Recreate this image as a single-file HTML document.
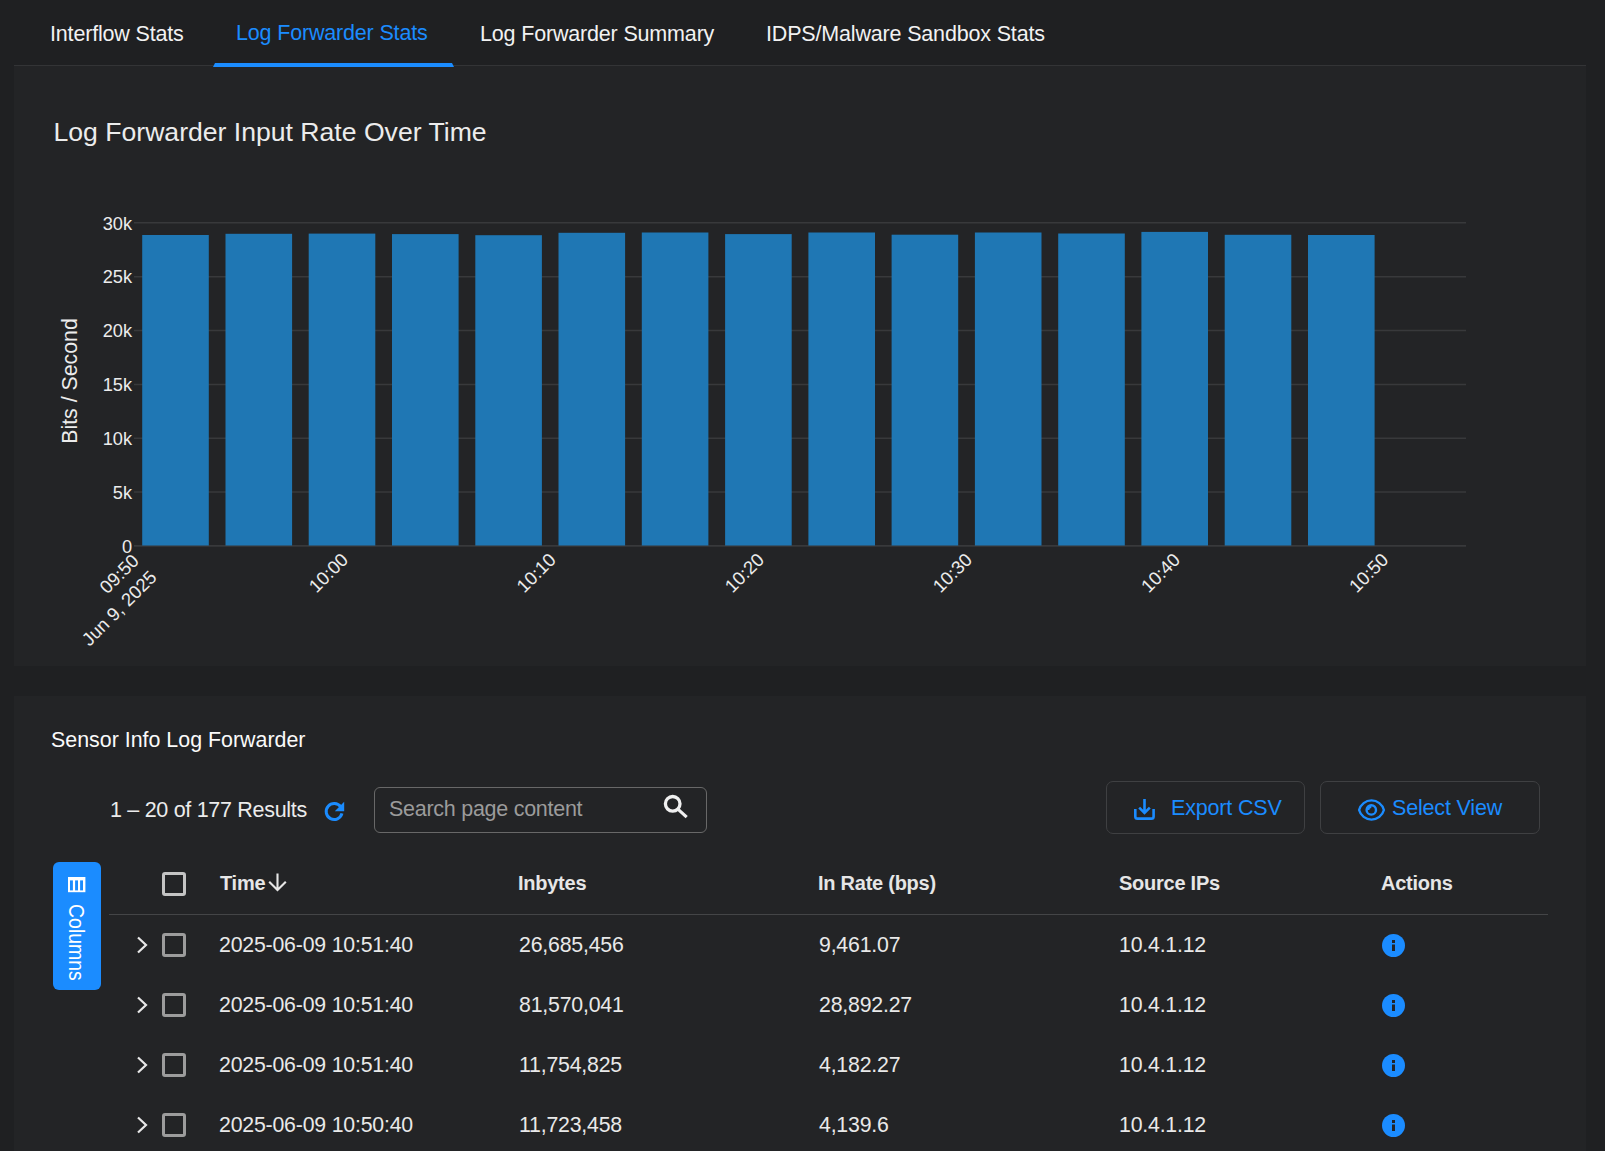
<!DOCTYPE html>
<html><head><meta charset="utf-8">
<style>
html,body{margin:0;padding:0;}
body{width:1605px;height:1151px;overflow:hidden;background:#1f2022;position:relative;font-family:"Liberation Sans",sans-serif;color:#ececec;}
.abs{position:absolute;}
.tab{position:absolute;top:22px;font-size:21.5px;letter-spacing:-0.17px;line-height:24px;white-space:nowrap;color:#f2f2f2;}
.panel{position:absolute;left:14px;width:1572px;background:#232426;}
.td{position:absolute;font-size:21.3px;letter-spacing:-0.2px;line-height:24px;white-space:nowrap;color:#e9e9e9;}
.th{position:absolute;font-size:20px;letter-spacing:-0.25px;line-height:24px;white-space:nowrap;color:#e6e6e6;font-weight:bold;}
.cb{position:absolute;width:18px;height:18px;border:3px solid #9c9c9c;border-radius:3px;}
.chev,.info{position:absolute;}
.btn{position:absolute;top:781px;height:51px;border:1px solid #3f4042;border-radius:7px;box-sizing:content-box;}
.btxt{position:absolute;font-size:21.5px;letter-spacing:-0.17px;line-height:24px;white-space:nowrap;color:#1b8cff;}
</style></head><body>
<!-- tabs -->
<div class="tab" style="left:50px">Interflow Stats</div>
<div class="tab" style="left:236px;top:21px;color:#1b8cff">Log Forwarder Stats</div>
<div class="tab" style="left:480px">Log Forwarder Summary</div>
<div class="tab" style="left:766px">IDPS/Malware Sandbox Stats</div>
<div class="abs" style="left:14px;top:65px;width:1572px;height:1px;background:#333436"></div>
<div class="panel" style="top:66px;height:600px"></div>
<div class="abs" style="left:213px;top:63px;width:241px;height:4px;background:#1b8cff;clip-path:polygon(2px 0,239px 0,241px 4px,0 4px)"></div>
<div class="panel" style="top:696px;height:455px"></div>

<!-- chart -->
<svg class="abs" style="left:0;top:0" width="1605" height="700" viewBox="0 0 1605 700">
<text x="53.5" y="141" font-family="Liberation Sans" font-size="26.6" fill="#ececec">Log Forwarder Input Rate Over Time</text>
<g stroke="#38393b" stroke-width="1.5">
<line x1="134" x2="1466" y1="222.8" y2="222.8"/>
<line x1="134" x2="1466" y1="276.7" y2="276.7"/>
<line x1="134" x2="1466" y1="330.6" y2="330.6"/>
<line x1="134" x2="1466" y1="384.5" y2="384.5"/>
<line x1="134" x2="1466" y1="438.3" y2="438.3"/>
<line x1="134" x2="1466" y1="492.1" y2="492.1"/>
<line x1="134" x2="1466" y1="545.8" y2="545.8" stroke-width="1.7"/>
</g>
<g fill="#1f77b4">
<rect x="142.2" y="235" width="66.6" height="310.5"/>
<rect x="225.5" y="233.8" width="66.6" height="311.7"/>
<rect x="308.7" y="233.6" width="66.6" height="311.9"/>
<rect x="392.0" y="234.1" width="66.6" height="311.4"/>
<rect x="475.3" y="235.2" width="66.6" height="310.3"/>
<rect x="558.5" y="232.8" width="66.6" height="312.7"/>
<rect x="641.8" y="232.5" width="66.6" height="313.0"/>
<rect x="725.1" y="234.1" width="66.6" height="311.4"/>
<rect x="808.4" y="232.5" width="66.6" height="313.0"/>
<rect x="891.6" y="234.7" width="66.6" height="310.8"/>
<rect x="974.9" y="232.5" width="66.6" height="313.0"/>
<rect x="1058.2" y="233.5" width="66.6" height="312.0"/>
<rect x="1141.4" y="231.9" width="66.6" height="313.6"/>
<rect x="1224.7" y="234.8" width="66.6" height="310.7"/>
<rect x="1308.0" y="235" width="66.6" height="310.5"/>
</g>
<g font-family="Liberation Sans" font-size="18.2" fill="#ececec">
<text x="132" y="229.5" text-anchor="end">30k</text>
<text x="132" y="283.4" text-anchor="end">25k</text>
<text x="132" y="337.3" text-anchor="end">20k</text>
<text x="132" y="391.2" text-anchor="end">15k</text>
<text x="132" y="445.1" text-anchor="end">10k</text>
<text x="132" y="499.0" text-anchor="end">5k</text>
<text x="132" y="552.5" text-anchor="end">0</text>
<text transform="translate(140.1,562) rotate(-45)" text-anchor="end" font-size="18.5">09:50</text>
<text transform="translate(349.2,561) rotate(-45)" text-anchor="end" font-size="18.5">10:00</text>
<text transform="translate(557.1,561) rotate(-45)" text-anchor="end" font-size="18.5">10:10</text>
<text transform="translate(765.2,561) rotate(-45)" text-anchor="end" font-size="18.5">10:20</text>
<text transform="translate(973.3,561) rotate(-45)" text-anchor="end" font-size="18.5">10:30</text>
<text transform="translate(1181.4,561) rotate(-45)" text-anchor="end" font-size="18.5">10:40</text>
<text transform="translate(1389.5,561) rotate(-45)" text-anchor="end" font-size="18.5">10:50</text>
<text transform="translate(157.8,578.5) rotate(-45)" text-anchor="end" font-size="18.5">Jun 9, 2025</text>
</g>
<text transform="translate(77,381) rotate(-90)" text-anchor="middle" font-family="Liberation Sans" font-size="21.3" fill="#ececec">Bits / Second</text>
</svg>

<!-- table section -->
<div class="abs" style="left:51px;top:728px;font-size:21.4px;line-height:24px;color:#fafafa;white-space:nowrap">Sensor Info Log Forwarder</div>
<div class="abs" style="left:110px;top:798px;font-size:21.5px;letter-spacing:-0.3px;line-height:24px;color:#ececec;white-space:nowrap">1 – 20 of 177 Results</div>
<svg class="abs" style="left:318px;top:795px" width="34" height="31" viewBox="0 0 34 31"><path d="M22.75 11.91 A8 8 0 1 0 23.96 18.44" fill="none" stroke="#1b8cff" stroke-width="3"/><path d="M26.2 6.8 V16.2 H16.8 Z" fill="#1b8cff"/></svg>
<div class="abs" style="left:374px;top:787px;width:331px;height:44px;border:1px solid #686868;border-radius:6px"></div>
<div class="abs" style="left:389px;top:797px;font-size:21.5px;letter-spacing:-0.27px;line-height:24px;color:#9b9b9b;white-space:nowrap">Search page content</div>
<svg class="abs" style="left:655px;top:788px" width="40" height="37" viewBox="0 0 40 37"><circle cx="17.7" cy="15.8" r="7.3" fill="none" stroke="#f0f0f0" stroke-width="3.3"/><path d="M22.6 20.9 L31.7 29.1" stroke="#f0f0f0" stroke-width="3.2"/></svg>

<div class="btn" style="left:1106px;width:197px"></div>
<svg class="abs" style="left:1133px;top:798px" width="24" height="24" viewBox="0 0 24 24"><path d="M11.5 0.9 V14.5 M6.2 9.6 L11.5 14.9 L16.8 9.6" fill="none" stroke="#1b8cff" stroke-width="2.6"/><path d="M2.3 11 V18.4 Q2.3 20.6 4.5 20.6 H18.4 Q20.6 20.6 20.6 18.4 V11" fill="none" stroke="#1b8cff" stroke-width="2.6"/></svg>
<div class="btxt" style="left:1171px;top:796px">Export CSV</div>
<div class="btn" style="left:1320px;width:218px"></div>
<svg class="abs" style="left:1353px;top:793px" width="38" height="34" viewBox="0 0 38 34"><path d="M6.1 17 A12.81 12.81 0 0 1 30.9 17 A12.81 12.81 0 0 1 6.1 17 Z" fill="none" stroke="#1b8cff" stroke-width="2.4" stroke-linejoin="round"/><circle cx="18.3" cy="16.95" r="4.7" fill="none" stroke="#1b8cff" stroke-width="2.4"/><path d="M13.65 16.95 A4.7 4.7 0 0 1 18.3 12.25 V15 A1.95 1.95 0 0 0 16.35 16.95 Z" fill="#1b8cff"/></svg>
<div class="btxt" style="left:1392px;top:796px">Select View</div>

<!-- columns button -->
<div class="abs" style="left:53px;top:862px;width:48px;height:128px;background:#1b8cff;border-radius:6px"></div>
<svg class="abs" style="left:67px;top:876px" width="20" height="18" viewBox="0 0 20 18"><rect x="1" y="1" width="17.4" height="15.2" fill="#fff"/><rect x="3" y="4.4" width="2.9" height="10" fill="#1b8cff"/><rect x="8.1" y="4.4" width="2.9" height="10" fill="#1b8cff"/><rect x="13.1" y="4.4" width="2.9" height="10" fill="#1b8cff"/></svg>
<div class="abs" style="left:64px;top:904px;width:24px;height:77px;"><div style="position:absolute;left:0;top:0;transform-origin:0 0;transform:translate(24px,0) rotate(90deg) scaleX(0.885);font-size:22px;line-height:24px;color:#fff;white-space:nowrap">Columns</div></div>

<!-- header -->
<div class="cb" style="left:162px;top:872px;border-color:#c4c4c4"></div>
<div class="th" style="left:220px;top:871px">Time</div>
<svg class="abs" style="left:267px;top:872px" width="21" height="22" viewBox="0 0 21 22"><path d="M10.5 1.5 V18 M2.2 9.8 L10.5 18.1 L18.8 9.8" fill="none" stroke="#e6e6e6" stroke-width="2.1"/></svg>
<div class="th" style="left:518px;top:871px">Inbytes</div>
<div class="th" style="left:818px;top:871px">In Rate (bps)</div>
<div class="th" style="left:1119px;top:871px">Source IPs</div>
<div class="th" style="left:1381px;top:871px">Actions</div>
<div class="abs" style="left:109px;top:914px;width:1439px;height:1px;background:#444547"></div>
<svg class="chev" style="left:136px;top:936px" width="14" height="18" viewBox="0 0 14 18"><path d="M2 1.5 L10 9 L2 16.5" fill="none" stroke="#e8e8e8" stroke-width="2.2"/></svg>
<div class="cb" style="left:162px;top:933px"></div>
<div class="td" style="left:219px;top:933px">2025-06-09 10:51:40</div>
<div class="td" style="left:519px;top:933px">26,685,456</div>
<div class="td" style="left:819px;top:933px">9,461.07</div>
<div class="td" style="left:1119px;top:933px">10.4.1.12</div>
<svg class="info" style="left:1382px;top:933.5px" width="23" height="23" viewBox="0 0 23 23"><circle cx="11.5" cy="11.5" r="11.5" fill="#1b8cff"/><rect x="10" y="6" width="3" height="3" fill="#232426"/><rect x="10" y="10.5" width="3" height="6.5" fill="#232426"/></svg>
<svg class="chev" style="left:136px;top:996px" width="14" height="18" viewBox="0 0 14 18"><path d="M2 1.5 L10 9 L2 16.5" fill="none" stroke="#e8e8e8" stroke-width="2.2"/></svg>
<div class="cb" style="left:162px;top:993px"></div>
<div class="td" style="left:219px;top:993px">2025-06-09 10:51:40</div>
<div class="td" style="left:519px;top:993px">81,570,041</div>
<div class="td" style="left:819px;top:993px">28,892.27</div>
<div class="td" style="left:1119px;top:993px">10.4.1.12</div>
<svg class="info" style="left:1382px;top:993.5px" width="23" height="23" viewBox="0 0 23 23"><circle cx="11.5" cy="11.5" r="11.5" fill="#1b8cff"/><rect x="10" y="6" width="3" height="3" fill="#232426"/><rect x="10" y="10.5" width="3" height="6.5" fill="#232426"/></svg>
<svg class="chev" style="left:136px;top:1056px" width="14" height="18" viewBox="0 0 14 18"><path d="M2 1.5 L10 9 L2 16.5" fill="none" stroke="#e8e8e8" stroke-width="2.2"/></svg>
<div class="cb" style="left:162px;top:1053px"></div>
<div class="td" style="left:219px;top:1053px">2025-06-09 10:51:40</div>
<div class="td" style="left:519px;top:1053px">11,754,825</div>
<div class="td" style="left:819px;top:1053px">4,182.27</div>
<div class="td" style="left:1119px;top:1053px">10.4.1.12</div>
<svg class="info" style="left:1382px;top:1053.5px" width="23" height="23" viewBox="0 0 23 23"><circle cx="11.5" cy="11.5" r="11.5" fill="#1b8cff"/><rect x="10" y="6" width="3" height="3" fill="#232426"/><rect x="10" y="10.5" width="3" height="6.5" fill="#232426"/></svg>
<svg class="chev" style="left:136px;top:1116px" width="14" height="18" viewBox="0 0 14 18"><path d="M2 1.5 L10 9 L2 16.5" fill="none" stroke="#e8e8e8" stroke-width="2.2"/></svg>
<div class="cb" style="left:162px;top:1113px"></div>
<div class="td" style="left:219px;top:1113px">2025-06-09 10:50:40</div>
<div class="td" style="left:519px;top:1113px">11,723,458</div>
<div class="td" style="left:819px;top:1113px">4,139.6</div>
<div class="td" style="left:1119px;top:1113px">10.4.1.12</div>
<svg class="info" style="left:1382px;top:1113.5px" width="23" height="23" viewBox="0 0 23 23"><circle cx="11.5" cy="11.5" r="11.5" fill="#1b8cff"/><rect x="10" y="6" width="3" height="3" fill="#232426"/><rect x="10" y="10.5" width="3" height="6.5" fill="#232426"/></svg>
</body></html>
